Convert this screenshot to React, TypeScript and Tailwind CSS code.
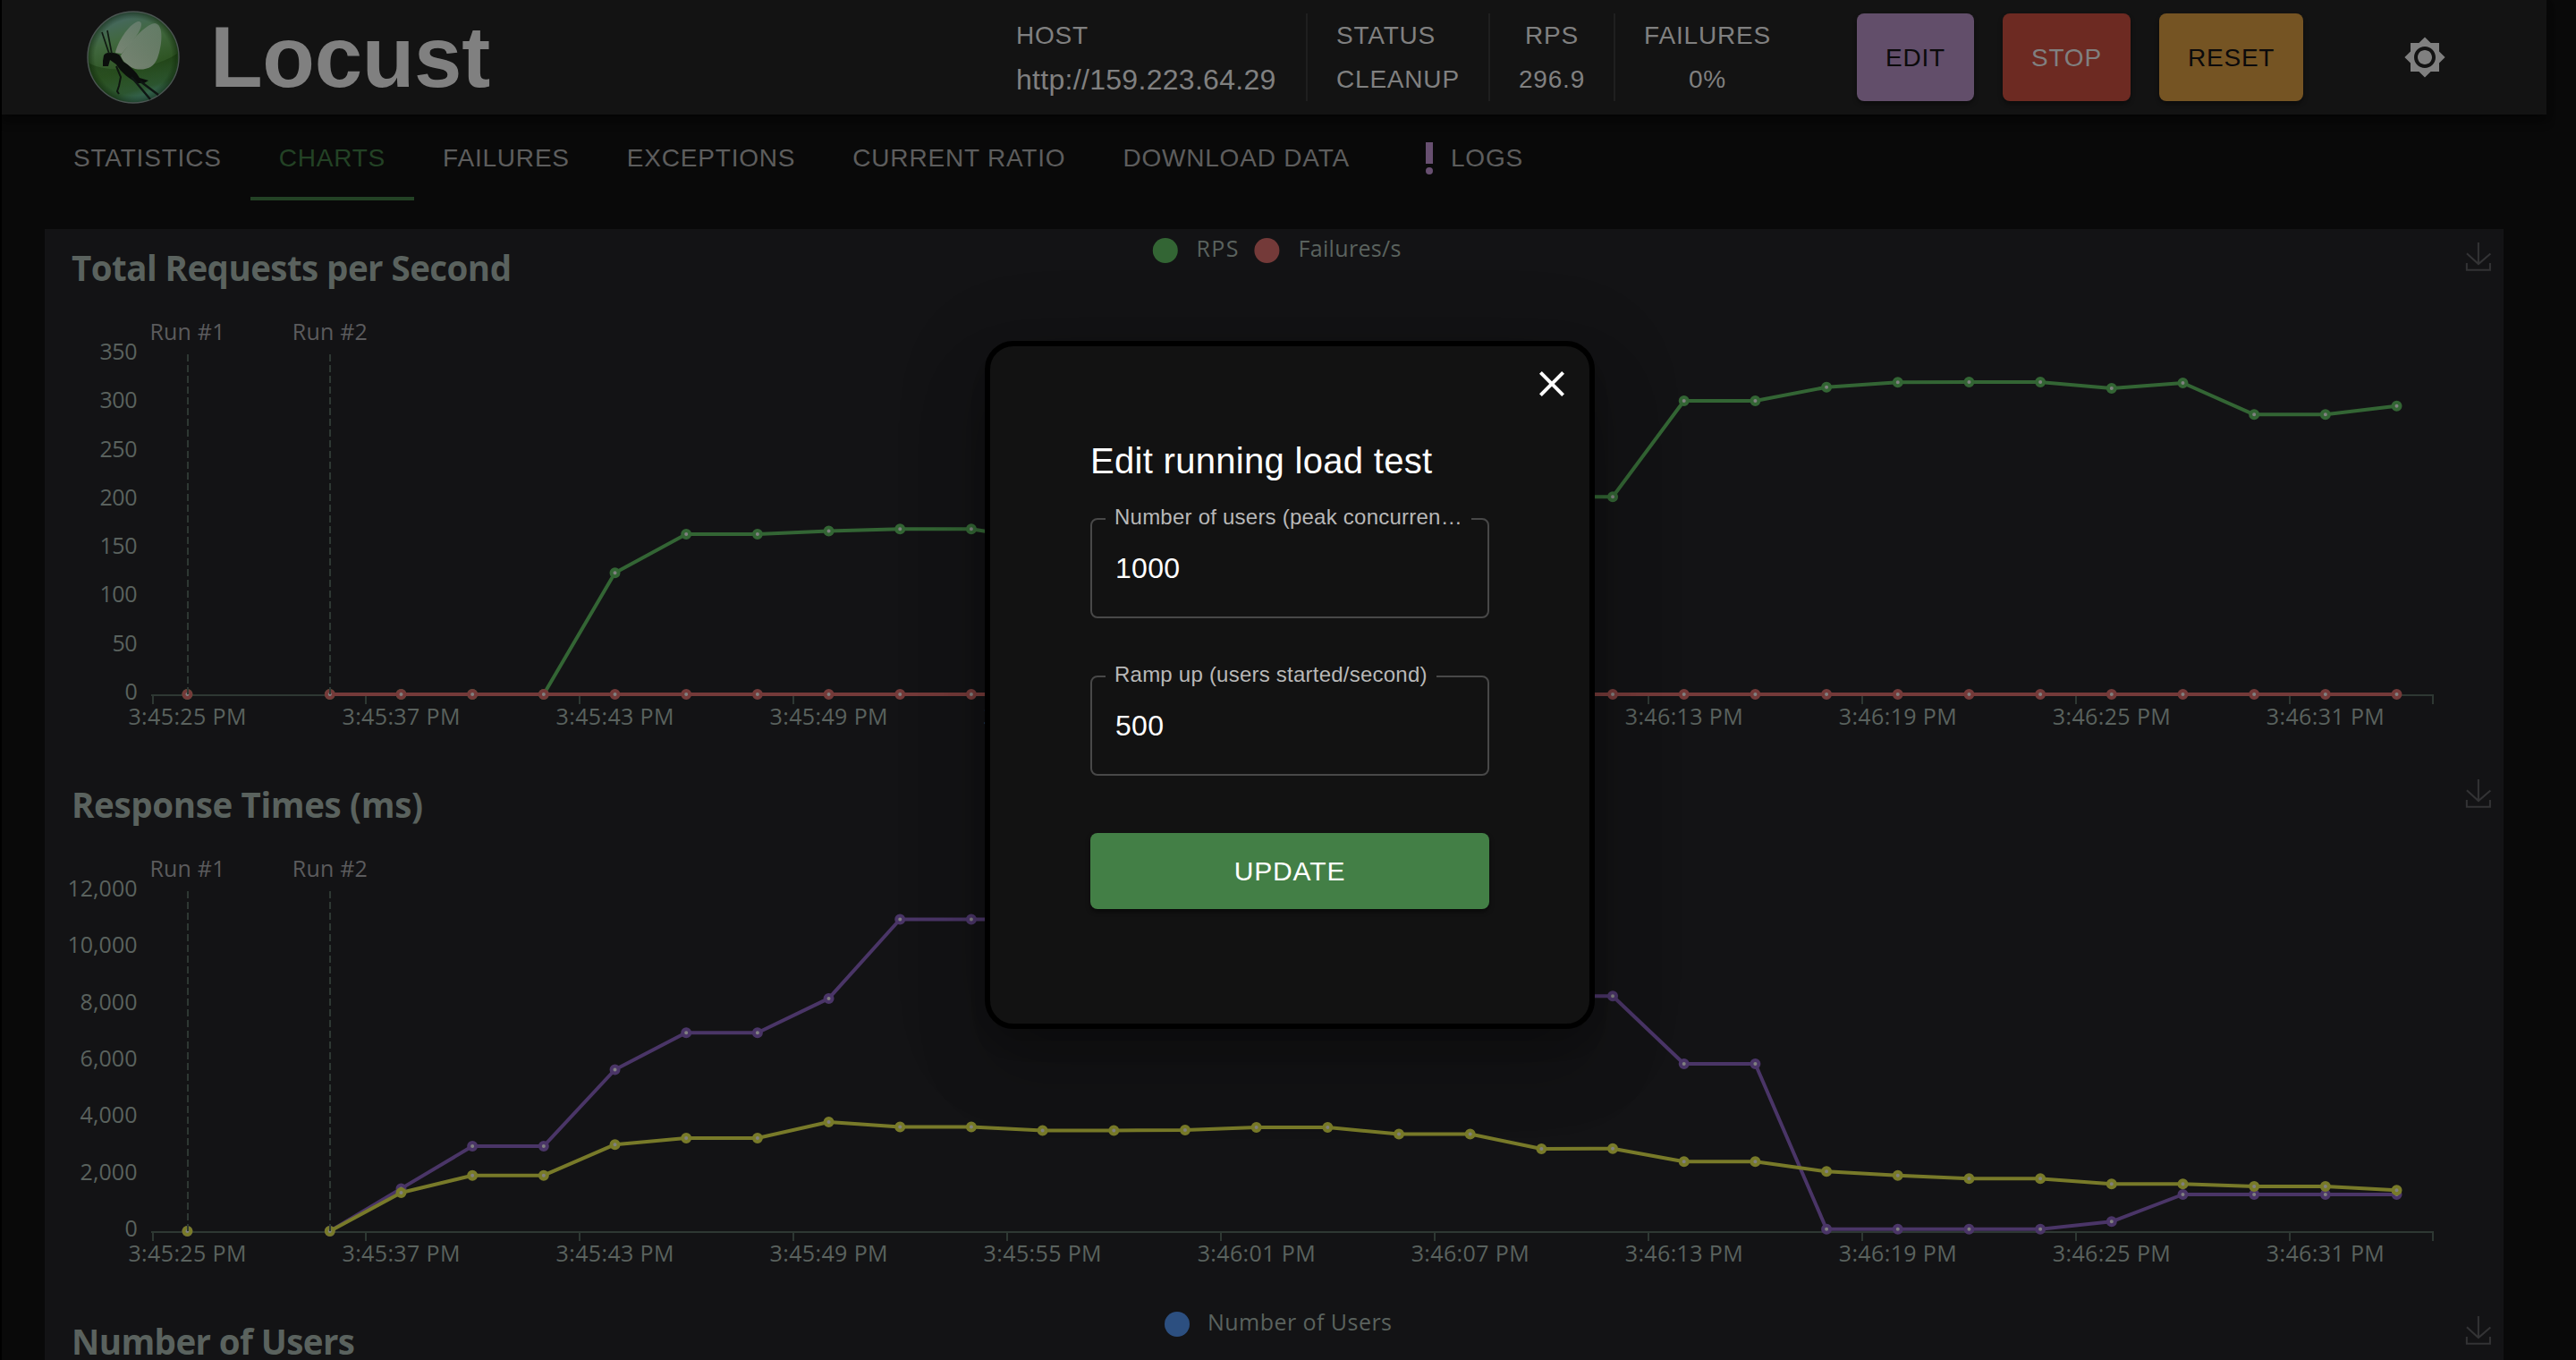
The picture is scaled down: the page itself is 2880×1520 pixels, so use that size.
import React from "react";

const STEP = 79.68;
const X0 = 169.6;
const px = (i: number) => X0 + STEP * (i + 0.5) - 50;

const TIMES = [
  "3:45:25 PM", "3:45:37 PM", "3:45:43 PM", "3:45:49 PM", "3:45:55 PM", "3:46:01 PM",
  "3:46:07 PM", "3:46:13 PM", "3:46:19 PM", "3:46:25 PM", "3:46:31 PM",
];

type Series = { color: string; points: [number, number][] };

const rps: Series = {
  color: "#336534",
  points: [
    [2, 520], [3, 520], [4, 520], [5, 520], [6, 384.3], [7, 341], [8, 341], [9, 337.5], [10, 335.3], [11, 335.3],
    [12, 348], [13, 348], [14, 342], [15, 336], [16, 330], [17, 318], [18, 310], [19, 299.3], [20, 299.3],
    [21, 192], [22, 192], [23, 176.7], [24, 171.3], [25, 171], [26, 171], [27, 178], [28, 172], [29, 207.3],
    [30, 207.3], [31, 197.7],
  ],
};

const failures: Series = {
  color: "#743a39",
  points: Array.from({ length: 30 }, (_, i): [number, number] => [i + 2, 520]),
};

const p95: Series = {
  color: "#4a3567",
  points: [
    [2, 520], [3, 472.4], [4, 425], [5, 425], [6, 339.5], [7, 298.2], [8, 298.2], [9, 259.9], [10, 171.5],
    [11, 171.5], [12, 171.5], [13, 200], [14, 200], [15, 220], [16, 220], [17, 240], [18, 240], [19, 257.3],
    [20, 257.3], [21, 333], [22, 333], [23, 517.7], [24, 517.7], [25, 517.7], [26, 517.7], [27, 509.3],
    [28, 479], [29, 479], [30, 479], [31, 479],
  ],
};

const p50: Series = {
  color: "#787a29",
  points: [
    [2, 520], [3, 477], [4, 457.7], [5, 457.7], [6, 423.2], [7, 416], [8, 416], [9, 398], [10, 403.4], [11, 403.4],
    [12, 407.5], [13, 407.5], [14, 407], [15, 404], [16, 404], [17, 411.5], [18, 411.5], [19, 428], [20, 427.7],
    [21, 442.3], [22, 442.3], [23, 453.3], [24, 457.7], [25, 461.3], [26, 461.3], [27, 467.3], [28, 467.3],
    [29, 470], [30, 470], [31, 474.3],
  ],
};

function Line({ series }: { series: Series }) {
  const all: [number, number][] = [[0, 520], ...series.points];
  return (
    <g stroke={series.color} strokeWidth="4" fill="none">
      <polyline points={series.points.map(([i, y]) => `${px(i)},${y}`).join(" ")} strokeLinejoin="bevel" />
      {all.map(([i, y]) => (
        <circle key={i} cx={px(i)} cy={y} r="4" fill="#808080" />
      ))}
    </g>
  );
}

type Legend = { color: string; cx: number; label: string; x: number; width: number };

type ChartProps = {
  title: string;
  titleWidth: number;
  labels?: { text: string; width: number }[];
  series?: Series[];
  legend?: Legend[];
};

function Chart({ title, titleWidth, labels = [], series = [], legend = [] }: ChartProps) {
  const gap = 380 / Math.max(1, labels.length - 1);
  return (
    <svg width="2749" height="600" viewBox="0 0 2749 600" className="block shrink-0 font-['Open_Sans',sans-serif] text-[25px]" fill="#5a625e">
      <text x="30" y="58" fontSize="38.5" fontWeight="700" textLength={titleWidth}>{title}</text>
      {legend.map((l) => (
        <g key={l.label}>
          <circle cx={l.cx} cy="24" r="14" fill={l.color} />
          <text x={l.x} y="30.5" textLength={l.width}>{l.label}</text>
        </g>
      ))}
      <path
        d="M4.7,22.9L29.3,45.5L54.7,23.4M4.6,43.6L4.6,58L53.8,58L53.8,43.6M29.2,45.1L29.2,0"
        transform="translate(2705.4 15) scale(.53)"
        stroke="#333335"
        strokeWidth="3.8"
        fill="none"
      />
      {labels.length > 0 && (
        <g>
          {labels.map((l, i) => (
            <text key={l.text} x={103.5 - l.width} y={526 - i * gap} textLength={l.width}>{l.text}</text>
          ))}
          <g stroke="#2e3833" strokeWidth="2">
            <path d="M119 521H2671" />
            {Array.from({ length: 11 }, (_, i) => (
              <path key={i} d={`M${Math.round(X0 - 50 + i * 3 * STEP) + (i ? 0 : 1)} 522v9`} />
            ))}
            <path d="M2670 522v9" />
          </g>
          {TIMES.map((t, i) => (
            <text key={t} x={px(i * 3) - 66} y={554} textLength="132">{t}</text>
          ))}
          {series.map((s) => <Line key={s.color} series={s} />)}
          {[0, 2].map((i, n) => (
            <g key={i}>
              <path d={`M${Math.round(px(i)) + (i ? 0 : 1)} 140V520`} stroke="#2e3833" strokeWidth="2" strokeDasharray="8 4" />
              <text x={px(i) - 42} y="124" textLength="84" fill="#5b5b5d">{`Run #${n + 1}`}</text>
            </g>
          ))}
        </g>
      )}
    </svg>
  );
}

function LocustLogo() {
  return (
    <svg width="104" height="104" viewBox="0 0 104 104" className="block">
      <defs>
        <linearGradient id="orb" x1="0.3" y1="0" x2="0.6" y2="1">
          <stop offset="0" stopColor="#47686a" />
          <stop offset="0.3" stopColor="#41683f" />
          <stop offset="0.62" stopColor="#2f5524" />
          <stop offset="0.85" stopColor="#2c5530" />
          <stop offset="1" stopColor="#3d6f69" />
        </linearGradient>
        <radialGradient id="rim" cx="0.5" cy="0.5" r="0.5">
          <stop offset="0.84" stopColor="#0c2408" stopOpacity="0" />
          <stop offset="1" stopColor="#0c2408" stopOpacity="0.6" />
        </radialGradient>
        <linearGradient id="shade" x1="0" y1="0" x2="0.2" y2="1">
          <stop offset="0" stopColor="#0f2c05" stopOpacity="0.7" />
          <stop offset="0.9" stopColor="#1d4418" stopOpacity="0" />
        </linearGradient>
        <linearGradient id="wing" x1="0.8" y1="0" x2="0.2" y2="1">
          <stop offset="0" stopColor="#76867a" stopOpacity="0.65" />
          <stop offset="1" stopColor="#7d887a" stopOpacity="0.9" />
        </linearGradient>
      </defs>
      <circle cx="52" cy="52" r="51" fill="url(#orb)" />
      <path d="M2 58C20 70 70 68 101 48C102 80 78 96 52 96C26 96 6 82 2 58Z" fill="url(#shade)" />
      <circle cx="52" cy="52" r="51" fill="url(#rim)" stroke="#4b5552" strokeWidth="1.4" />
      <path d="M32 47C34 36 46 16 57 12C64 11 61 21 54 30L39 48Z" fill="url(#wing)" />
      <path d="M38 50C48 36 64 16 76 14C87 15 84 40 79 53C75 64 65 67 54 65C46 62 40 57 38 50Z" fill="url(#wing)" />
      <path d="M19 50C21 46 29 46 36 49C38 51 39 54 41 57C47 60 56 69 59 75L69 78L64 81H57C49 77 38 69 33 60L26 55L24 62H18L18 56Z" fill="#0b0e0c" />
      <path d="M25 48L17 24M28 48L23 22" stroke="#101a12" strokeWidth="1.7" fill="none" />
      <path d="M33 62L38 74L36 84L34 90L36 93" stroke="#0e150f" strokeWidth="2" fill="none" />
      <path d="M50 74L71 99M60 79L80 94" stroke="#0e1613" strokeWidth="2.4" fill="none" />
    </svg>
  );
}

function Stat({ label, value, className = "" }: { label: string; value: string; className?: string }) {
  return (
    <div className={`flex flex-col items-center justify-between ${className}`}>
      <span className="leading-[50px]">{label}</span>
      <span className="leading-[48px]">{value}</span>
    </div>
  );
}

function Header() {
  return (
    <header className="flex h-32 w-[2845px] items-center bg-[#131313] text-[28px] tracking-[0.8px] text-[#808080] shadow-[0_4px_8px_-2px_rgba(0,0,0,0.35),0_8px_10px_rgba(0,0,0,0.25)]">
      <div className="flex w-[1134px] items-center pl-[95px]">
        <LocustLogo />
        <h1 className="ml-[34px] text-[96px] leading-none font-bold tracking-[-0.3px]">Locust</h1>
      </div>
      <div className="flex h-[98px]">
        <div className="flex w-[326px] flex-col justify-between border-r-2 border-[#1f1f1f]">
          <span className="leading-[50px]">HOST</span>
          <span className="text-[32px] leading-[48px] tracking-[0.3px]">http://159.223.64.29</span>
        </div>
        <div className="flex w-[204px] flex-col justify-between border-r-2 border-[#1f1f1f] pl-8">
          <span className="leading-[50px]">STATUS</span>
          <span className="leading-[48px]">CLEANUP</span>
        </div>
        <Stat label="RPS" value="296.9" className="w-[140px] border-r-2 border-[#1f1f1f]" />
        <Stat label="FAILURES" value="0%" className="w-[206px]" />
      </div>
      <div className="ml-16 flex h-[98px] gap-8 text-[#0b0a0b]">
        <button className="rounded-lg bg-[#624e6a] px-8 pt-0.5 shadow-[0_3px_5px_rgba(0,0,0,0.4)]">EDIT</button>
        <button className="rounded-lg bg-[#6d2a22] px-8 pt-0.5 text-[#808080] shadow-[0_3px_5px_rgba(0,0,0,0.4)]">STOP</button>
        <button className="rounded-lg bg-[#755423] px-8 pt-0.5 shadow-[0_3px_5px_rgba(0,0,0,0.4)]">RESET</button>
      </div>
      <svg viewBox="0 0 24 24" className="ml-28 size-12" fill="#808080">
        <path d="M20 8.69V4h-4.69L12 .69 8.69 4H4v4.69L.69 12 4 15.31V20h4.69L12 23.31 15.31 20H20v-4.69L23.31 12 20 8.69zM12 18c-3.31 0-6-2.69-6-6s2.69-6 6-6 6 2.69 6 6-2.69 6-6 6zm0-10c-2.21 0-4 1.79-4 4s1.79 4 4 4 4-1.79 4-4-1.79-4-4-4z" />
      </svg>
    </header>
  );
}

function Tabs() {
  return (
    <nav className="flex h-24 pl-12 text-[28px] tracking-[0.8px] text-[#5d5d5d]">
      <div className="flex items-center px-8 pt-0.5">STATISTICS</div>
      <div className="flex items-center border-b-4 border-[#234225] px-8 pt-1.5 text-[#234225]">CHARTS</div>
      <div className="flex items-center px-8 pt-0.5">FAILURES</div>
      <div className="flex items-center px-8 pt-0.5">EXCEPTIONS</div>
      <div className="flex items-center px-8 pt-0.5">CURRENT RATIO</div>
      <div className="flex items-center px-8 pt-0.5">DOWNLOAD DATA</div>
      <div className="flex items-center px-[33px] pt-0.5">
        <svg viewBox="0 0 24 24" className="size-12" fill="#674f70">
          <circle cx="12" cy="19" r="2" />
          <path d="M10 3h4v12h-4z" />
        </svg>
        LOGS
      </div>
    </nav>
  );
}

function Field({ label, value }: { label: string; value: string }) {
  return (
    <fieldset className="h-[122px] rounded-lg border-2 border-[#484848] px-[15px]">
      <legend className="h-[22px] max-w-[409px] px-[10px] text-[24px] tracking-[0.23px] text-[#b8b8b8]">
        <div className="-mt-[6px] truncate leading-[30px]">{label}</div>
      </legend>
      <div className="px-[11px] pt-[21px] text-[32px] leading-[46px] tracking-[0.3px] text-white">{value}</div>
    </fieldset>
  );
}

function EditDialog() {
  return (
    <div className="absolute top-[381px] left-[1099px] flex h-[769px] w-[682px] flex-col rounded-[32px] border-6 border-black bg-[#121212] px-28 shadow-[0_22px_30px_-14px_rgba(0,0,0,0.2),0_48px_76px_6px_rgba(0,0,0,0.14),0_18px_92px_16px_rgba(0,0,0,0.12)]">
      <svg viewBox="0 0 24 24" className="mt-[18px] -mr-[94px] size-12 self-end" fill="#fff">
        <path d="M19 6.41 17.59 5 12 10.59 6.41 5 5 6.41 10.59 12 5 17.59 6.41 19 12 13.41 17.59 19 19 17.59 13.41 12z" />
      </svg>
      <h2 className="mt-[30px] text-[40px] leading-[64px] tracking-[0.3px] text-white">Edit running load test</h2>
      <div className="mt-[22px] flex flex-col gap-[54px]">
        <Field label="Number of users (peak concurrency)" value="1000" />
        <Field label="Ramp up (users started/second)" value="500" />
      </div>
      <button className="mt-16 h-[85px] rounded-lg bg-[#437f46] text-[30px] tracking-[0.86px] text-white shadow-[0_3px_5px_rgba(0,0,0,0.5)]">
        UPDATE
      </button>
    </div>
  );
}

export default function App() {
  return (
    <div className="relative h-[1520px] w-[2880px] overflow-hidden border-l-2 border-black bg-[#090909] font-['Liberation_Sans',Arial,sans-serif]">
      <Header />
      <Tabs />
      <main className="mt-8 ml-12 flex h-[1264px] w-[2749px] flex-col overflow-hidden bg-[#131315]">
        <Chart
          title="Total Requests per Second"
          titleWidth={492}
          labels={[
            { text: "0", width: 14 }, { text: "50", width: 28 }, { text: "100", width: 42 }, { text: "150", width: 42 },
            { text: "200", width: 42 }, { text: "250", width: 42 }, { text: "300", width: 42 }, { text: "350", width: 42 },
          ]}
          series={[rps, failures]}
          legend={[
            { color: "#336534", cx: 1252.8, label: "RPS", x: 1287.5, width: 47 },
            { color: "#743a39", cx: 1366.4, label: "Failures/s", x: 1401.5, width: 115 },
          ]}
        />
        <Chart
          title="Response Times (ms)"
          titleWidth={393}
          labels={[
            { text: "0", width: 14 }, { text: "2,000", width: 64 }, { text: "4,000", width: 64 }, { text: "6,000", width: 64 },
            { text: "8,000", width: 64 }, { text: "10,000", width: 78 }, { text: "12,000", width: 78 },
          ]}
          series={[p95, p50]}
        />
        <Chart
          title="Number of Users"
          titleWidth={317}
          legend={[{ color: "#2c4f80", cx: 1266, label: "Number of Users", x: 1300, width: 206 }]}
        />
      </main>
      <EditDialog />
    </div>
  );
}
